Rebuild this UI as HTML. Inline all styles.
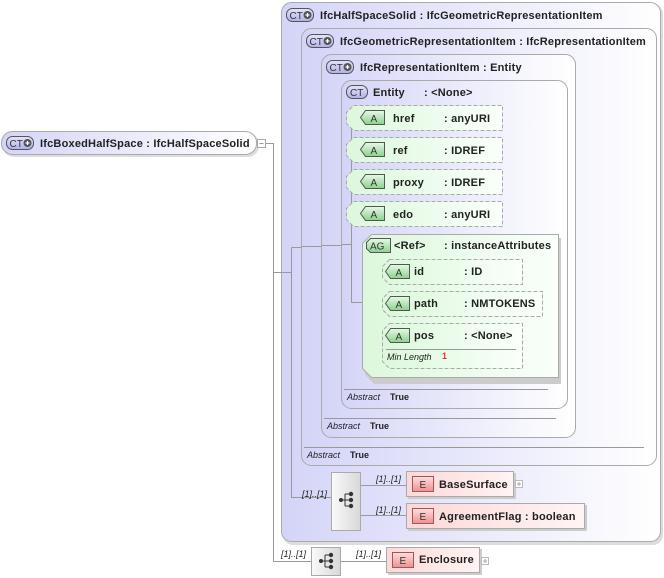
<!DOCTYPE html>
<html><head><meta charset="utf-8"><style>
html,body{margin:0;padding:0;background:#fff;width:664px;height:578px;overflow:hidden}
svg text{font-family:"Liberation Sans",sans-serif;font-size:11px;font-weight:bold;fill:#222;letter-spacing:0.2px}
svg text.i{font-style:italic;font-weight:normal;font-size:9px;letter-spacing:0}
svg text.b{font-size:9px;letter-spacing:0}
svg text.g{font-weight:normal;font-size:10px;fill:#333;letter-spacing:0}
</style></head><body>
<svg width="664" height="578" viewBox="0 0 664 578" xmlns="http://www.w3.org/2000/svg">
<defs>
<linearGradient id="ct" x1="0" y1="0" x2="1" y2="0"><stop offset="0" stop-color="#d4d4f8"/><stop offset="1" stop-color="#ffffff"/></linearGradient>
<linearGradient id="ctb" x1="0" y1="0" x2="0" y2="1"><stop offset="0" stop-color="#e4e4fc"/><stop offset="1" stop-color="#b0b0e8"/></linearGradient>
<linearGradient id="gr" x1="0" y1="0" x2="1" y2="0"><stop offset="0" stop-color="#dcf8dc"/><stop offset="1" stop-color="#fafffa"/></linearGradient>
<linearGradient id="grb" x1="0" y1="0" x2="0" y2="1"><stop offset="0" stop-color="#e6fae6"/><stop offset="1" stop-color="#8ed08e"/></linearGradient>
<linearGradient id="pk" x1="0" y1="0" x2="1" y2="0"><stop offset="0" stop-color="#fcd8d8"/><stop offset="1" stop-color="#fff4f4"/></linearGradient>
<linearGradient id="pkb" x1="0" y1="0" x2="0" y2="1"><stop offset="0" stop-color="#fde0e0"/><stop offset="1" stop-color="#ee9090"/></linearGradient>
<linearGradient id="sq" x1="0" y1="0" x2="1" y2="0"><stop offset="0" stop-color="#fafafa"/><stop offset="1" stop-color="#d8d8d8"/></linearGradient>
<g id="ctp"><rect x="0" y="0" width="27" height="13" rx="6" fill="url(#ctb)" stroke="#555"/><text class="g" x="3" y="10.5">CT</text><circle cx="21" cy="6.5" r="4" fill="#555"/><path d="M19 6.5h4M21 4.5v4" stroke="#fff" stroke-width="1.2"/></g>
<g id="ab"><path d="M5 0h19v14H5L0 7z" fill="url(#grb)" stroke="#555"/><text class="g" x="10" y="11.5">A</text></g>
<g id="eb"><rect x="0" y="0" width="21" height="15" fill="url(#pkb)" stroke="#a55"/><text class="g" x="7" y="11.5">E</text></g>
<g id="seq"><circle cx="0" cy="0" r="2" fill="#333"/><path d="M0 0h4M4 -6v12M4 -6h5M4 0h5M4 6h5" stroke="#333" fill="none"/><circle cx="10" cy="-6" r="2.2" fill="#333"/><circle cx="10" cy="0" r="2.2" fill="#333"/><circle cx="10" cy="6" r="2.2" fill="#333"/></g>
</defs>

<rect x="3" y="133" width="256" height="24" rx="11" fill="#ddd"/>
<rect x="1.5" y="131.5" width="255" height="23" rx="11" fill="url(#ct)" stroke="#aaa"/>
<use href="#ctp" x="6.5" y="136.5"/>
<text x="40" y="147">IfcBoxedHalfSpace : IfcHalfSpaceSolid</text>
<rect x="257.5" y="139.5" width="8" height="8" fill="#fff" stroke="#aaa"/><path d="M259.5 143.5h4" stroke="#999"/>

<rect x="283" y="4" width="380" height="541" rx="10" fill="#ddd"/>
<rect x="281.5" y="2.5" width="379" height="539" rx="10" fill="url(#ct)" stroke="#aaa"/>
<use href="#ctp" x="286.5" y="8.5"/>
<text x="320" y="19">IfcHalfSpaceSolid : IfcGeometricRepresentationItem</text>

<rect x="301.5" y="28.5" width="355" height="437" rx="10" fill="url(#ct)" stroke="#aaa"/>
<use href="#ctp" x="306.5" y="34.5"/>
<text x="340" y="45">IfcGeometricRepresentationItem : IfcRepresentationItem</text>
<path d="M304 447.5h340" stroke="#999"/>
<text class="i" x="307" y="458">Abstract</text><text class="b" x="350" y="458">True</text>

<rect x="321.5" y="54.5" width="254" height="383" rx="10" fill="url(#ct)" stroke="#aaa"/>
<use href="#ctp" x="326.5" y="60.5"/>
<text x="360" y="71">IfcRepresentationItem : Entity</text>
<path d="M324 418.5h232" stroke="#999"/>
<text class="i" x="327" y="429">Abstract</text><text class="b" x="370" y="429">True</text>

<rect x="341.5" y="80.5" width="226" height="328" rx="10" fill="url(#ct)" stroke="#aaa"/>
<rect x="346.5" y="85.5" width="21" height="13" rx="6" fill="url(#ctb)" stroke="#555"/><text class="g" x="350" y="96">CT</text>
<text x="373" y="96">Entity</text><text x="424" y="96">: &lt;None&gt;</text>
<path d="M344 389.5h204" stroke="#999"/>
<text class="i" x="347" y="400">Abstract</text><text class="b" x="390" y="400">True</text>

<g stroke="#999" fill="none">
<path d="M265.5 143.5h8v418h38M273.5 272.5h18M291.5 247.5v250h40M291.5 247.5h10M301.5 246.5h20M321.5 245.5h20M341.5 244.5h10M351.5 117.5v185h30M346 117.5h5M346 149.5h5M346 181.5h5M346 213.5h5"/>
<path d="M371.5 271.5v64h10M371.5 271.5h10"/>
<path d="M360 485.5h46M360 515.5h46M340 561.5h46"/>
</g>

<g>
<path d="M353.5 105.5h149v25h-149l-7-7v-11z" fill="url(#gr)" stroke="#aaa" stroke-dasharray="4,2"/>
<use href="#ab" x="360.5" y="110.5"/><text x="393" y="122">href</text><text x="444" y="122">: anyURI</text>
<path d="M353.5 137.5h149v25h-149l-7-7v-11z" fill="url(#gr)" stroke="#aaa" stroke-dasharray="4,2"/>
<use href="#ab" x="360.5" y="142.5"/><text x="393" y="154">ref</text><text x="444" y="154">: IDREF</text>
<path d="M353.5 169.5h149v25h-149l-7-7v-11z" fill="url(#gr)" stroke="#aaa" stroke-dasharray="4,2"/>
<use href="#ab" x="360.5" y="174.5"/><text x="393" y="186">proxy</text><text x="444" y="186">: IDREF</text>
<path d="M353.5 201.5h149v25h-149l-7-7v-11z" fill="url(#gr)" stroke="#aaa" stroke-dasharray="4,2"/>
<use href="#ab" x="360.5" y="206.5"/><text x="393" y="218">edo</text><text x="444" y="218">: anyURI</text>
</g>

<path d="M374 238h187v146H374l-9-9V247z" fill="#ccc"/>
<path d="M371.5 234.5h187v143h-187l-9-9v-125z" fill="url(#gr)" stroke="#aaa"/>
<path d="M370.5 238.5h20v14h-20l-4-4v-6z" fill="url(#grb)" stroke="#555"/><text class="g" x="370" y="249.5">AG</text>
<text x="394" y="249">&lt;Ref&gt;</text><text x="444" y="249">: instanceAttributes</text>
<path d="M389.5 259.5h133v25h-133l-7-7v-11z" fill="url(#gr)" stroke="#aaa" stroke-dasharray="4,2"/>
<use href="#ab" x="385.5" y="264.5"/><text x="414" y="275">id</text><text x="464" y="275">: ID</text>
<path d="M389.5 291.5h153v25h-153l-7-7v-11z" fill="url(#gr)" stroke="#aaa" stroke-dasharray="4,2"/>
<use href="#ab" x="385.5" y="296.5"/><text x="414" y="307">path</text><text x="464" y="307">: NMTOKENS</text>
<path d="M389.5 323.5h133v45h-133l-7-7v-31z" fill="url(#gr)" stroke="#aaa" stroke-dasharray="4,2"/>
<use href="#ab" x="385.5" y="328.5"/><text x="414" y="339">pos</text><text x="464" y="339">: &lt;None&gt;</text>
<path d="M386 349.5h130" stroke="#999"/>
<text class="i" x="387" y="360">Min Length</text><text class="b" x="442" y="359" style="fill:#e33">1</text>

<rect x="331.5" y="472.5" width="29" height="58" fill="url(#sq)" stroke="#aaa"/>
<use href="#seq" x="341" y="500"/>
<rect x="311.5" y="547.5" width="29" height="28" fill="url(#sq)" stroke="#aaa"/>
<use href="#seq" x="321" y="561"/>
<text class="i" x="302" y="497">[1]..[1]</text>
<text class="i" x="376" y="482">[1]..[1]</text>
<text class="i" x="376" y="513">[1]..[1]</text>
<text class="i" x="281" y="557">[1]..[1]</text>
<text class="i" x="356" y="557">[1]..[1]</text>

<rect x="408" y="473" width="108" height="26" fill="#ccc"/>
<rect x="406.5" y="471.5" width="107" height="25" fill="url(#pk)" stroke="#aaa"/>
<use href="#eb" x="412.5" y="476.5"/><text x="439" y="488">BaseSurface</text>
<rect x="515.5" y="480.5" width="7" height="7" fill="#fff" stroke="#bbb"/><path d="M517 484h4M519 482v4" stroke="#aaa"/>
<rect x="408" y="505" width="179" height="26" fill="#ccc"/>
<rect x="406.5" y="503.5" width="178" height="25" fill="url(#pk)" stroke="#aaa"/>
<use href="#eb" x="412.5" y="508.5"/><text x="439" y="520">AgreementFlag : boolean</text>
<rect x="388" y="549" width="94" height="26" fill="#ccc"/>
<rect x="386.5" y="547.5" width="93" height="25" fill="url(#pk)" stroke="#aaa"/>
<use href="#eb" x="392.5" y="552.5"/><text x="419" y="563">Enclosure</text>
<rect x="481.5" y="557.5" width="7" height="7" fill="#fff" stroke="#bbb"/><path d="M483 561h4M485 559v4" stroke="#aaa"/>
</svg>
</body></html>
